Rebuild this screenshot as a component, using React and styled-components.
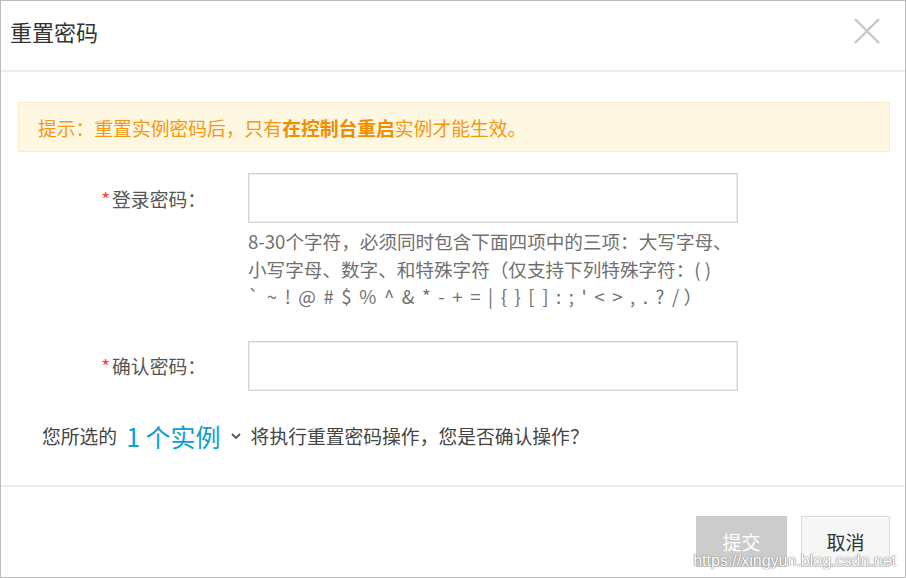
import React from 'react'
import styled, { createGlobalStyle } from 'styled-components'

const GlobalStyle = createGlobalStyle`
  html, body {
    margin: 0;
    padding: 0;
    background: #fff;
  }
  body {
    font-family: "Noto Sans CJK SC", "Liberation Sans", sans-serif;
  }
`

const Dialog = styled.div`
  position: relative;
  box-sizing: border-box;
  width: 906px;
  height: 578px;
  border: 1px solid #bcbcbc;
  background: #fff;
  display: flex;
  flex-direction: column;
  overflow: hidden;
`

const Header = styled.div`
  box-sizing: border-box;
  height: 71px;
  flex: none;
  display: flex;
  align-items: center;
  justify-content: space-between;
  padding: 0 24px 10px 9px;
  border-bottom: 2px solid #ebebeb;
`

const Title = styled.h2`
  margin: 0;
  font-size: 22px;
  font-weight: normal;
  color: #333;
  line-height: 30px;
`

const CloseButton = styled.button`
  border: none;
  background: none;
  padding: 0;
  width: 28px;
  height: 28px;
  cursor: pointer;
  svg {
    display: block;
  }
`

const Body = styled.div`
  box-sizing: border-box;
  height: 415px;
  flex: none;
  padding: 30px 15px 0 17px;
  border-bottom: 2px solid #ececec;
`

const Notice = styled.div`
  box-sizing: border-box;
  height: 50px;
  display: flex;
  align-items: center;
  padding-left: 19px;
  background: #fef7e2;
  border: 1px solid #fbeacb;
  color: #f5980f;
  font-size: 18.8px;
  strong {
    font-weight: bold;
    color: #f08c00;
  }
`

const FieldRow = styled.div`
  display: grid;
  grid-template-columns: 188px 490px;
  column-gap: 42px;
  align-items: center;
  margin-top: ${(p) => p.$top}px;
`

const Label = styled.label`
  text-align: right;
  font-size: 18.8px;
  color: #555;
  span {
    color: #ff3b30;
    margin-right: 2px;
  }
`

const Input = styled.input`
  box-sizing: border-box;
  height: 50px;
  width: 490px;
  border: 1px solid #d4d4d4;
  box-shadow: inset 0 0 0 1px #ececec;
  outline: none;
  padding: 0 10px;
  font-size: 18px;
`

const Help = styled.p`
  margin: 4px 0 0 230px;
  width: 600px;
  font-size: 18.6px;
  line-height: 27.5px;
  color: #707070;
  white-space: nowrap;
`

const Symbols = styled.span`
  word-spacing: 3px;
  letter-spacing: 0.2px;
`

const Confirm = styled.p`
  margin: 29px 0 0 24px;
  font-size: 18.8px;
  line-height: 32px;
  color: #444;
  display: flex;
  align-items: center;
`

const Count = styled.a`
  color: #0aa0d2;
  font-size: 25px;
  margin: 0 8px 0 9px;
  text-decoration: none;
`

const Chevron = styled.svg`
  margin: 2px 10px 0 2px;
`

const Footer = styled.div`
  flex: 1;
  display: flex;
  justify-content: flex-end;
  align-items: flex-start;
  gap: 14px;
  padding: 29px 15px 0 0;
`

const Button = styled.button`
  box-sizing: border-box;
  width: ${(p) => p.$w}px;
  height: 51px;
  font-family: inherit;
  font-size: 19px;
  border: 1px solid ${(p) => (p.$primary ? '#cccccc' : '#dcdcdc')};
  background: ${(p) => (p.$primary ? '#cccccc' : '#f6f6f6')};
  color: ${(p) => (p.$primary ? '#fff' : '#333')};
  cursor: ${(p) => (p.$primary ? 'not-allowed' : 'pointer')};
`

const Watermark = styled.div`
  position: absolute;
  right: 9px;
  bottom: 6px;
  font-family: "Liberation Sans", Arial, sans-serif;
  font-size: 16px;
  line-height: 20px;
  color: #fff;
  text-shadow: 0 0 1px #8a8a8a, 0 0 1px #8a8a8a, 0 0 1px #8a8a8a;
  pointer-events: none;
`

export default function App() {
  return (
    <>
      <GlobalStyle />
      <Dialog>
        <Header>
          <Title>重置密码</Title>
          <CloseButton aria-label='关闭'>
            <svg width='28' height='28' viewBox='0 0 28 28'>
              <path
                d='M2 2 L26 26 M26 2 L2 26'
                stroke='#c6c6c6'
                strokeWidth='2.4'
                fill='none'
              />
            </svg>
          </CloseButton>
        </Header>
        <Body>
          <Notice>
            提示：重置实例密码后，只有<strong>在控制台重启</strong>实例才能生效。
          </Notice>
          <FieldRow $top={21}>
            <Label>
              <span>*</span>登录密码：
            </Label>
            <Input type='password' />
          </FieldRow>
          <Help>
            8-30个字符，必须同时包含下面四项中的三项：大写字母、
            <br />
            小写字母、数字、和特殊字符（仅支持下列特殊字符：( )
            <br />
            <Symbols>
              ` ~ ! @ # $ % ^ &amp; * - + = | {'{'} {'}'} [ ] : ; ' &lt; &gt; , . ? /
            </Symbols>{' '}
            ）
          </Help>
          <FieldRow $top={31}>
            <Label>
              <span>*</span>确认密码：
            </Label>
            <Input type='password' />
          </FieldRow>
          <Confirm>
            您所选的
            <Count href='#'>1 个实例</Count>
            <Chevron width='10' height='7' viewBox='0 0 10 7'>
              <path d='M1 1 L5 5 L9 1' stroke='#555' strokeWidth='1.8' fill='none' />
            </Chevron>
            将执行重置密码操作，您是否确认操作？
          </Confirm>
        </Body>
        <Footer>
          <Button $primary $w={91}>
            提交
          </Button>
          <Button $w={89}>取消</Button>
        </Footer>
        <Watermark>https://xingyun.blog.csdn.net</Watermark>
      </Dialog>
    </>
  )
}
